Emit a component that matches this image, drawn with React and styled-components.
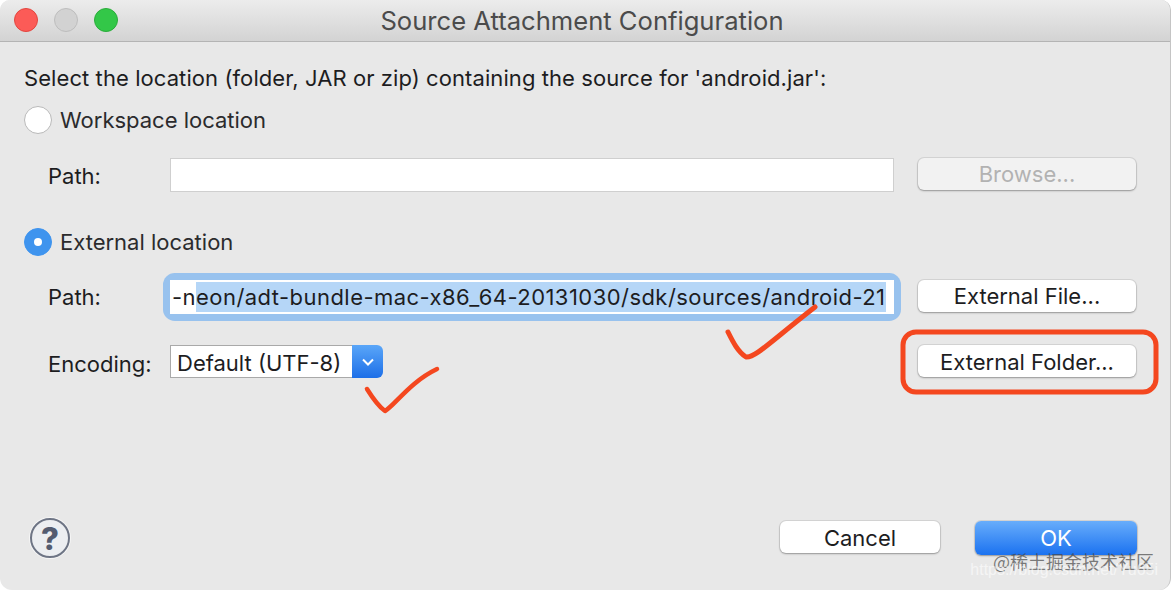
import React from 'react';
import styled, { createGlobalStyle } from 'styled-components';

const GlobalStyle = createGlobalStyle`
  html, body {
    margin: 0;
    padding: 0;
    background: #fff;
    overflow: hidden;
  }
  * {
    box-sizing: border-box;
  }
`;

const Window = styled.div`
  position: relative;
  width: 1171px;
  height: 590px;
  display: flex;
  flex-direction: column;
  background: #e8e8e8;
  border-right: 1px solid #c4c4c4;
  border-radius: 10px 10px 12px 12px;
  overflow: hidden;
  font-family: Inter, "Liberation Sans", sans-serif;
  font-size: 22px;
  color: #1d1d1f;
`;

const TitleBar = styled.div`
  position: relative;
  flex: none;
  height: 42px;
  display: flex;
  align-items: center;
  justify-content: center;
  background: linear-gradient(#ececec, #d3d3d3);
  border-bottom: 1px solid #b4b4b4;
`;

const Lights = styled.div`
  position: absolute;
  left: 14px;
  top: 8px;
  display: flex;
  gap: 16px;
`;

const Light = styled.span`
  width: 24px;
  height: 24px;
  border-radius: 50%;
  background: ${(p) => p.$color};
  border: 1px solid ${(p) => p.$edge};
`;

const Title = styled.div`
  font-size: 25.6px;
  color: #4b4b4b;
  margin-right: 6px;
`;

const Body = styled.div`
  flex: 1;
  display: flex;
  flex-direction: column;
  padding: 21px 34px 32px 24px;
`;

const Heading = styled.div`
  line-height: 30px;
  height: 30px;
  letter-spacing: 0.08px;
`;

const RadioRow = styled.div`
  display: flex;
  align-items: center;
  gap: 8px;
  height: 30px;
  margin-top: ${(p) => p.$top}px;
  color: #2b2b2d;
`;

const Radio = styled.span`
  width: 28px;
  height: 28px;
  border-radius: 50%;
  display: flex;
  align-items: center;
  justify-content: center;
  background: ${(p) => (p.$checked ? '#3f94ee' : '#fff')};
  border: 1px solid ${(p) => (p.$checked ? '#3f94ee' : '#b9b9b9')};

  &::after {
    content: '';
    display: ${(p) => (p.$checked ? 'block' : 'none')};
    width: 8px;
    height: 8px;
    border-radius: 50%;
    background: #fff;
  }
`;

const FieldRow = styled.div`
  display: grid;
  grid-template-columns: 98px 724px 218px;
  column-gap: 24px;
  align-items: center;
  padding-left: 24px;
  margin-top: ${(p) => p.$top}px;
`;

const Label = styled.div`
  color: #1d1d1f;
  padding-top: ${(p) => p.$nudge || 0}px;
`;

const TextField = styled.div`
  height: 34px;
  background: #fff;
  border: 1px solid #cfcfcf;
`;

const FocusRing = styled.div`
  border-radius: 5px;
  box-shadow: 0 0 0 7px #98c2ee;
`;

const FocusedField = styled.div`
  height: 34px;
  padding: 0 8px 0 2px;
  display: flex;
  align-items: center;
  background: #fff;
  white-space: nowrap;
  overflow: hidden;
  letter-spacing: 0.45px;
`;

const Selected = styled.span`
  display: block;
  flex: 1;
  line-height: 30px;
  background: #b5d6f7;
`;

const SelectWrap = styled.div`
  width: 213px;
  height: 33px;
  display: flex;
`;

const SelectValue = styled.div`
  flex: 1;
  padding: 2px 0 0 6px;
  line-height: 30px;
  background: #fff;
  border: 1px solid #a9a9a9;
  border-right: none;
`;

const SelectArrow = styled.div`
  width: 31px;
  display: flex;
  align-items: center;
  justify-content: center;
  color: #fff;
  background: linear-gradient(#5aa6f8, #1d6fe8);
  border-radius: 0 6px 6px 0;
`;

const Button = styled.button`
  height: ${(p) => p.$height || 32}px;
  width: ${(p) => p.$width || 218}px;
  padding: ${(p) => p.$nudge || 0}px 0 0;
  font: inherit;
  color: ${(p) => (p.$primary ? '#fff' : p.disabled ? '#b2b2b2' : '#1d1d1f')};
  border: none;
  border-radius: 6px;
  background: ${(p) =>
    p.$primary
      ? 'linear-gradient(#68adfb, #1b72f0)'
      : p.disabled
        ? '#f2f2f2'
        : '#fff'};
  box-shadow: 0 0 0 1px rgba(0, 0, 0, 0.08), 0 1px 2px rgba(0, 0, 0, 0.3);
  align-self: start;
`;

const Footer = styled.div`
  margin-top: auto;
  margin-right: -1px;
  display: flex;
  align-items: center;
`;

const Help = styled.div`
  width: 40px;
  height: 40px;
  margin-left: 6px;
  border-radius: 50%;
  display: flex;
  align-items: center;
  justify-content: center;
  background: #eceef1;
  border: 2.5px solid #6e7585;
  box-shadow: 0 0 0 1px #f6f6f6;
  color: #545c70;
  font-size: 31px;
  font-weight: 800;
`;

const FooterButtons = styled.div`
  margin-left: auto;
  display: flex;
  align-items: center;
  gap: 35px;
`;

const Marks = styled.svg`
  position: absolute;
  left: 0;
  top: 0;
  pointer-events: none;
`;

const Watermark = styled.div`
  position: absolute;
  right: 16px;
  bottom: 19px;
  font-family: "Noto Sans CJK SC", sans-serif;
  font-size: 18px;
  line-height: 20px;
  color: rgba(70, 70, 70, 0.7);
`;

const WatermarkUrl = styled.div`
  position: absolute;
  right: 12px;
  bottom: 10px;
  font-family: "Liberation Sans", sans-serif;
  font-size: 16px;
  line-height: 20px;
  color: rgba(255, 255, 255, 0.6);
`;

const App = () => (
  <>
    <GlobalStyle />
    <Window>
      <TitleBar>
        <Lights>
          <Light $color="#fc5b57" $edge="#e2463f" />
          <Light $color="#d2d2d2" $edge="#bdbdbd" />
          <Light $color="#33c748" $edge="#2aac3b" />
        </Lights>
        <Title>Source Attachment Configuration</Title>
      </TitleBar>
      <Body>
        <Heading>Select the location (folder, JAR or zip) containing the source for 'android.jar':</Heading>
        <RadioRow $top={12}>
          <Radio />
          Workspace location
        </RadioRow>
        <FieldRow $top={23}>
          <Label $nudge={2}>Path:</Label>
          <TextField />
          <Button disabled>Browse...</Button>
        </FieldRow>
        <RadioRow $top={35}>
          <Radio $checked />
          External location
        </RadioRow>
        <FieldRow $top={23}>
          <Label>Path:</Label>
          <FocusRing>
            <FocusedField>
              -n<Selected>eon/adt-bundle-mac-x86_64-20131030/sdk/sources/android-21</Selected>
            </FocusedField>
          </FocusRing>
          <Button>External File...</Button>
        </FieldRow>
        <FieldRow $top={31}>
          <Label $nudge={4}>Encoding:</Label>
          <SelectWrap>
            <SelectValue>Default (UTF-8)</SelectValue>
            <SelectArrow>
              <svg width="14" height="10" viewBox="0 0 14 10">
                <path d="M2 2.5 L7 7.5 L12 2.5" fill="none" stroke="currentColor" strokeWidth="2" />
              </svg>
            </SelectArrow>
          </SelectWrap>
          <Button $nudge={2}>External Folder...</Button>
        </FieldRow>
        <Footer>
          <Help>?</Help>
          <FooterButtons>
            <Button $width={160} $nudge={2}>Cancel</Button>
            <Button $primary $width={162} $height={34}>OK</Button>
          </FooterButtons>
        </Footer>
      </Body>
      <Marks width="1171" height="590" viewBox="0 0 1171 590" fill="none" stroke="#f4471f" strokeLinecap="round" strokeLinejoin="round">
        <path d="M728 332 C733 342 738 352 746 357 C755 358 770 342 815 307" strokeWidth="5" />
        <path d="M367 389 C372 397 378 406 385 411 C395 405 410 382 437 369" strokeWidth="4.5" />
        <rect x="903" y="332" width="253" height="60" rx="13" strokeWidth="5" />
      </Marks>
      <Watermark>@稀土掘金技术社区</Watermark>
      <WatermarkUrl>https://blog.csdn.net/Yu65i</WatermarkUrl>
    </Window>
  </>
);

export default App;
